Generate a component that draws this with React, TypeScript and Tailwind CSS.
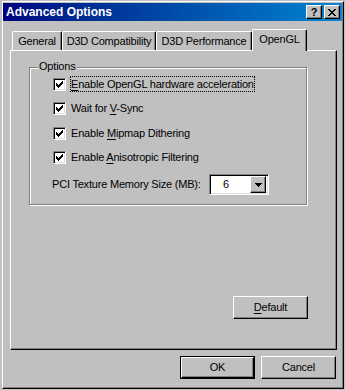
import React from 'react';

const raised =
    'border border-t-white border-l-white border-r-black border-b-black shadow-[inset_-1px_-1px_0_#808080] bg-[#c0c0c0]';

const CheckMark: React.FC = () => (
    <svg width="7" height="7" viewBox="0 0 7 7" shapeRendering="crispEdges">
        <path
            d="M0 2h1v3h-1zM1 3h1v3h-1zM2 4h1v3h-1zM3 3h1v3h-1zM4 2h1v3h-1zM5 1h1v3h-1zM6 0h1v3h-1z"
            fill="#000"
        />
    </svg>
);

interface CheckRowProps {
    label: React.ReactNode;
    focused?: boolean;
    className?: string;
}

const CheckRow: React.FC<CheckRowProps> = ({ label, focused, className }) => (
    <div className={`flex items-center h-[16px] pl-[23px] gap-[4px] ${className ?? ''}`}>
        <div className="w-[13px] h-[13px] bg-white border border-t-[#808080] border-l-[#808080] border-r-white border-b-white shadow-[inset_1px_1px_0_#000,inset_-1px_-1px_0_#dfdfdf] flex items-center justify-center">
            <CheckMark />
        </div>
        <span
            className={`h-[16px] flex items-center border border-dotted ${focused ? 'border-black' : 'border-transparent'}`}
        >
            <span className="whitespace-pre">{label}</span>
        </span>
    </div>
);

const U: React.FC<{ children: React.ReactNode }> = ({ children }) => (
    <span className="underline underline-offset-[2px]">{children}</span>
);

const tabs = [
    { name: 'General', w: 'w-[50px]' },
    { name: 'D3D Compatibility', w: 'w-[94px]' },
    { name: 'D3D Performance', w: 'w-[96px]' },
];

export default function App() {
    return (
        <div className="w-[345px] h-[390px] bg-[#c0c0c0] overflow-hidden font-['Liberation_Sans',Arial,sans-serif] text-[11px] tracking-[-0.2px] text-black leading-none">
            <div className="ml-[2px] mt-[1px] w-[342px] h-[388px] border border-t-white border-l-white border-r-black border-b-black shadow-[inset_-1px_-1px_0_#808080] pt-[1px]">
                {/* title bar */}
                <div className="h-[18px] mr-[1px] bg-gradient-to-r from-[#000080] to-[#1084d0] flex items-center justify-between pl-[3px] pr-[2px]">
                    <span className="text-white font-bold text-[12px] tracking-normal">Advanced Options</span>
                    <div className="flex gap-[2px]">
                        <div className={`w-[16px] h-[14px] ${raised} flex items-center justify-center font-bold text-[11px]`}>
                            ?
                        </div>
                        <div className={`w-[16px] h-[14px] ${raised} flex items-center justify-center`}>
                            <svg width="8" height="7" viewBox="0 0 8 7" shapeRendering="crispEdges">
                                <path
                                    d="M0 0h2v1h-2zM6 0h2v1h-2zM1 1h2v1h-2zM5 1h2v1h-2zM2 2h4v1h-4zM3 3h2v1h-2zM2 4h4v1h-4zM1 5h2v1h-2zM5 5h2v1h-2zM0 6h2v1h-2zM6 6h2v1h-2z"
                                    fill="#000"
                                />
                            </svg>
                        </div>
                    </div>
                </div>

                <div className="pl-[7px] mt-[8px]">
                    {/* tabs */}
                    <div className="flex items-end h-[21px] pl-[2px]">
                        {tabs.map((t) => (
                            <div
                                key={t.name}
                                className={`${t.w} h-[19px] border-t border-l border-r border-t-white border-l-white border-r-black shadow-[inset_-1px_0_0_#808080] rounded-t-[2px] flex items-center justify-center pt-[1px]`}
                            >
                                {t.name}
                            </div>
                        ))}
                        <div className="relative z-10 w-[55px] h-[22px] -mb-[1px] bg-[#c0c0c0] border-t border-l border-r border-t-white border-l-white border-r-black shadow-[inset_-1px_0_0_#808080] rounded-t-[2px] flex items-center justify-center pb-[2px]">
                            OpenGL
                        </div>
                    </div>

                    {/* panel */}
                    <div className="w-[327px] h-[300px] border border-t-white border-l-white border-r-black border-b-black shadow-[inset_-1px_-1px_0_#808080] flex flex-col">
                        <div className="relative ml-[18px] mt-[16px] w-[278px] h-[138px] border border-[#808080] shadow-[inset_1px_1px_0_#fff,1px_1px_0_#fff]">
                            <span className="absolute left-[8px] -top-[7px] px-[1px] bg-[#c0c0c0]">Options</span>
                            <div className="pt-[8px]">
                                <CheckRow
                                    focused
                                    label={
                                        <>
                                            <U>E</U>nable OpenGL hardware acceleration
                                        </>
                                    }
                                />
                                <CheckRow
                                    className="mt-[8px]"
                                    label={
                                        <>
                                            {'Wait for '}
                                            <U>V</U>-Sync
                                        </>
                                    }
                                />
                                <CheckRow
                                    className="mt-[9px]"
                                    label={
                                        <>
                                            {'Enable '}
                                            <U>M</U>ipmap Dithering
                                        </>
                                    }
                                />
                                <CheckRow
                                    className="mt-[8px]"
                                    label={
                                        <>
                                            {'Enable '}
                                            <U>A</U>nisotropic Filtering
                                        </>
                                    }
                                />
                                <div className="flex items-center mt-[9px] ml-[22px]">
                                    <span className="w-[157px]">PCI Texture Memory Size (MB):</span>
                                    <div className="w-[60px] h-[21px] bg-white border border-t-[#808080] border-l-[#808080] border-r-white border-b-white shadow-[inset_1px_1px_0_#000,inset_-1px_-1px_0_#dfdfdf] flex items-center p-[2px]">
                                        <span className="flex-1 pl-[11px]">6</span>
                                        <div className={`w-[16px] h-[17px] ${raised} flex items-center justify-center`}>
                                            <svg width="7" height="4" viewBox="0 0 7 4" shapeRendering="crispEdges">
                                                <path d="M0 0h7v1h-7zM1 1h5v1h-5zM2 2h3v1h-3zM3 3h1v1h-1z" fill="#000" />
                                            </svg>
                                        </div>
                                    </div>
                                </div>
                            </div>
                        </div>

                        <div className={`self-end mr-[28px] mt-[91px] w-[75px] h-[23px] ${raised} flex items-center justify-center`}>
                            <span>
                                <U>D</U>efault
                            </span>
                        </div>
                    </div>

                    {/* dialog buttons */}
                    <div className="w-[327px] flex justify-end gap-[6px] pr-[1px] mt-[6px]">
                        <div className="w-[75px] h-[23px] border border-black">
                            <div className={`w-full h-full ${raised} flex items-center justify-center`}>OK</div>
                        </div>
                        <div className={`w-[75px] h-[23px] ${raised} flex items-center justify-center`}>Cancel</div>
                    </div>
                </div>
            </div>
        </div>
    );
}
